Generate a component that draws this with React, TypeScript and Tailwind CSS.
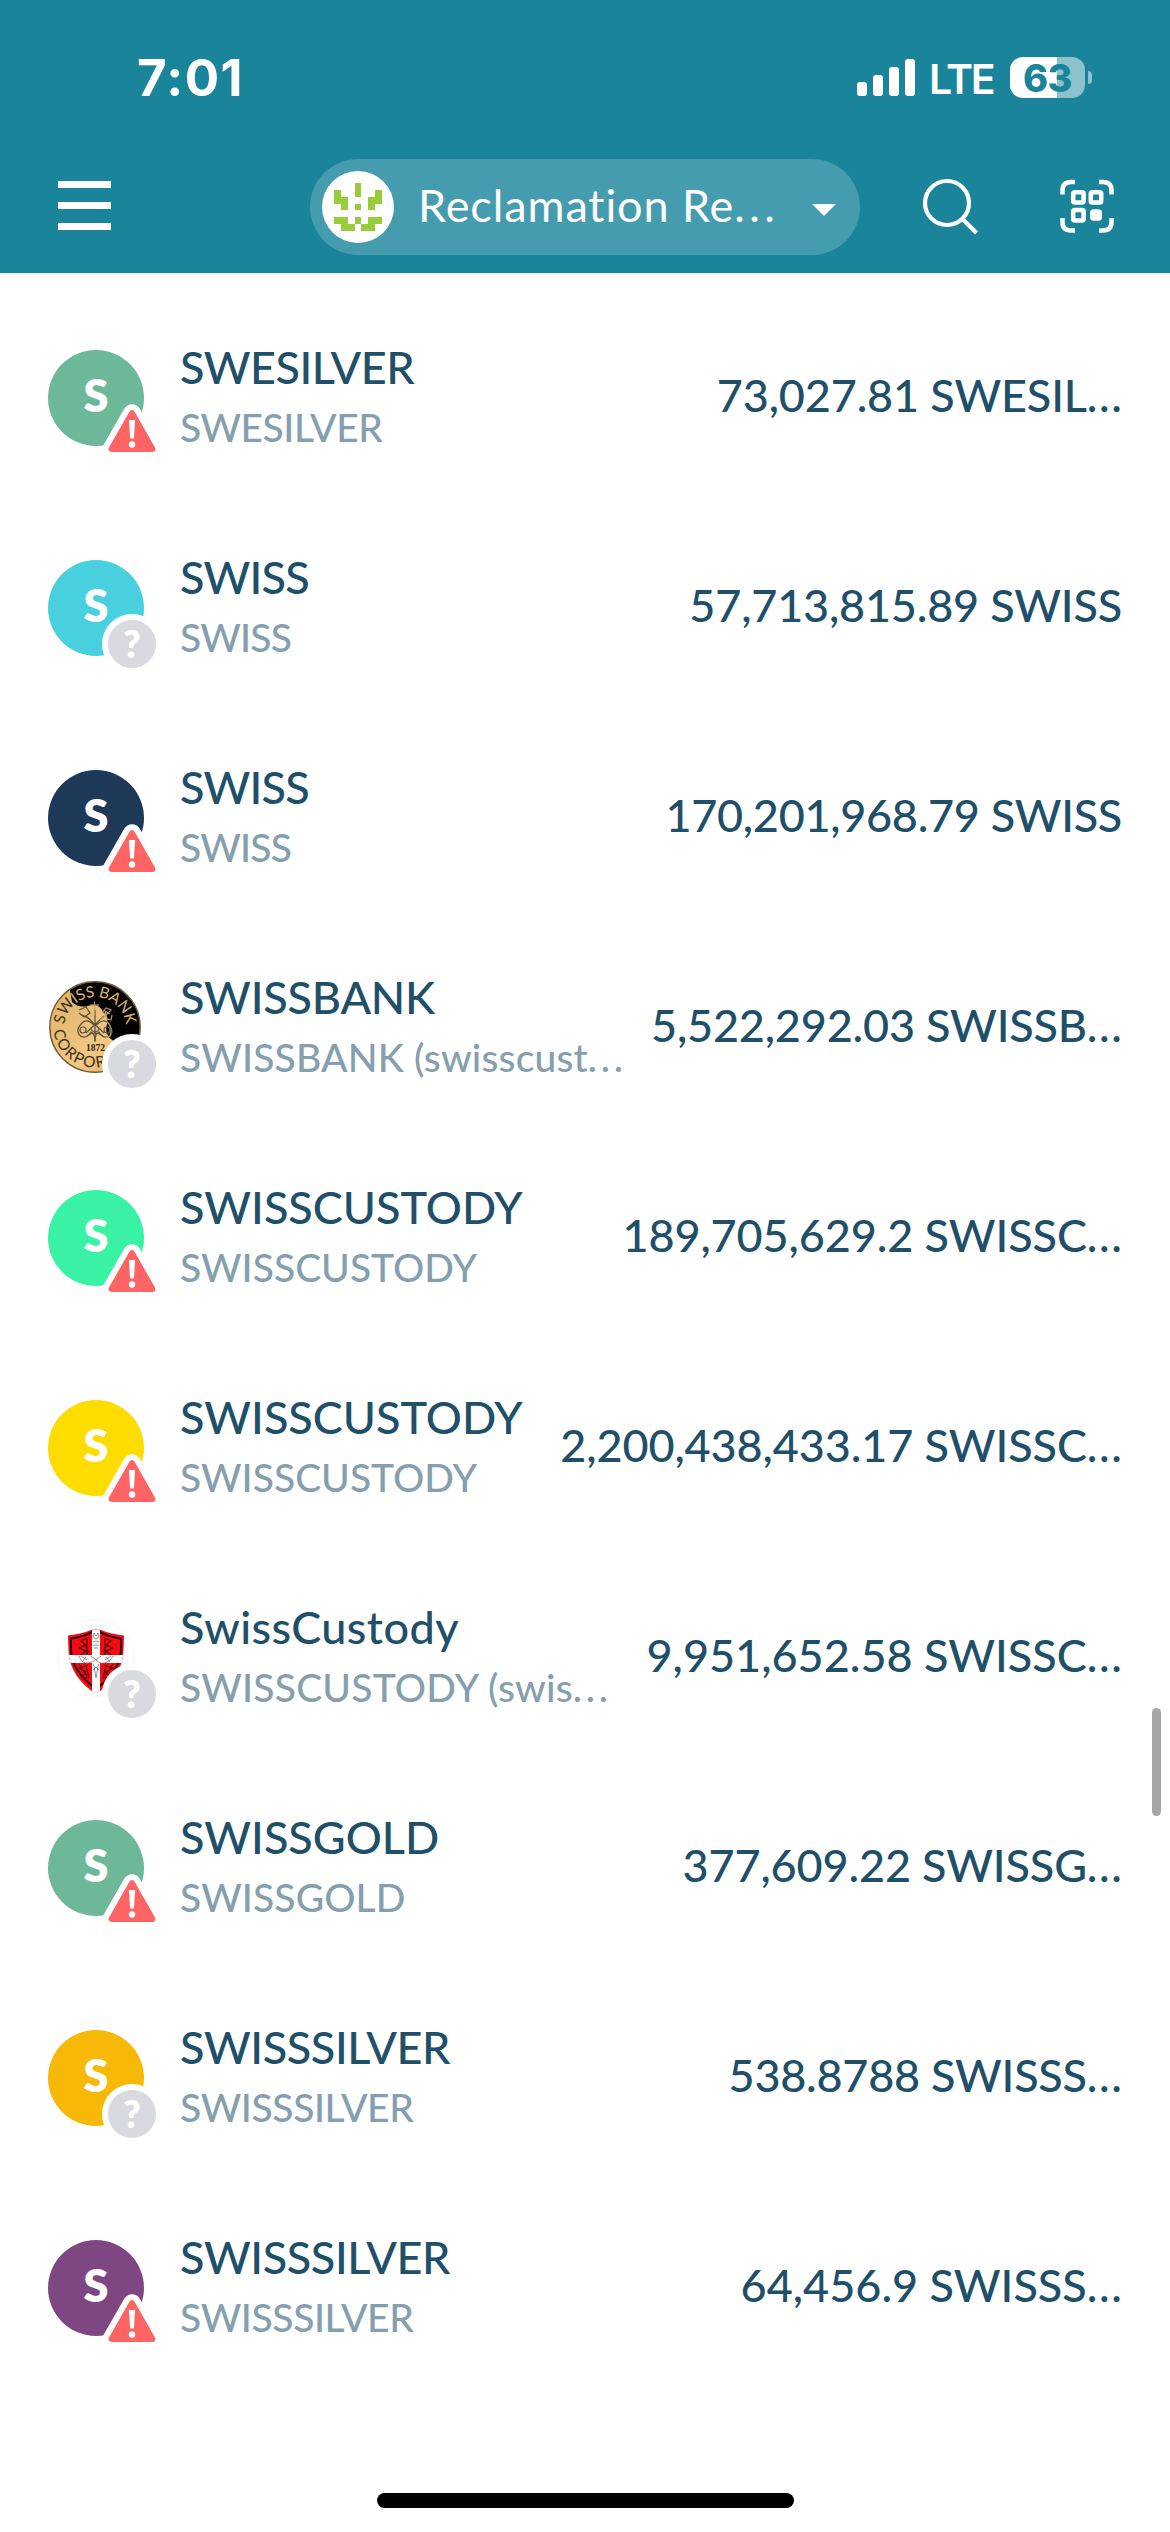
import React from "react";

type Badge = "warning" | "unknown";

type Token = {
  name: string;
  nameTracking: string;
  sub: string;
  subTracking: string;
  amount: string;
  amountTracking: string;
  badge: Badge;
  avatar: string | "coin" | "shield";
};

const tokens: Token[] = [
  { name: "SWESILVER", nameTracking: "tracking-[-0.5px]", sub: "SWESILVER", subTracking: "tracking-[-0.5px]", amount: "73,027.81 SWESIL...", amountTracking: "tracking-[-0.15px]", badge: "warning", avatar: "bg-[#6db898]" },
  { name: "SWISS", nameTracking: "tracking-[-0.8px]", sub: "SWISS", subTracking: "tracking-[-0.8px]", amount: "57,713,815.89 SWISS", amountTracking: "tracking-[-0.2px]", badge: "unknown", avatar: "bg-[#48d0de]" },
  { name: "SWISS", nameTracking: "tracking-[-0.8px]", sub: "SWISS", subTracking: "tracking-[-0.8px]", amount: "170,201,968.79 SWISS", amountTracking: "tracking-[-0.3px]", badge: "warning", avatar: "bg-[#1e3857]" },
  { name: "SWISSBANK", nameTracking: "tracking-[-0.2px]", sub: "SWISSBANK (swisscust...", subTracking: "tracking-[0.15px]", amount: "5,522,292.03 SWISSB...", amountTracking: "tracking-[-0.2px]", badge: "unknown", avatar: "coin" },
  { name: "SWISSCUSTODY", nameTracking: "tracking-[0px]", sub: "SWISSCUSTODY", subTracking: "tracking-[0px]", amount: "189,705,629.2 SWISSC...", amountTracking: "tracking-[-0.1px]", badge: "warning", avatar: "bg-[#39f2a3]" },
  { name: "SWISSCUSTODY", nameTracking: "tracking-[0px]", sub: "SWISSCUSTODY", subTracking: "tracking-[0px]", amount: "2,200,438,433.17 SWISSC...", amountTracking: "tracking-[-0.1px]", badge: "warning", avatar: "bg-[#ffdc00]" },
  { name: "SwissCustody", nameTracking: "tracking-[0.45px]", sub: "SWISSCUSTODY (swis...", subTracking: "tracking-[0.2px]", amount: "9,951,652.58 SWISSC...", amountTracking: "tracking-[0px]", badge: "unknown", avatar: "shield" },
  { name: "SWISSGOLD", nameTracking: "tracking-[0px]", sub: "SWISSGOLD", subTracking: "tracking-[0.1px]", amount: "377,609.22 SWISSG...", amountTracking: "tracking-[-0.15px]", badge: "warning", avatar: "bg-[#6db898]" },
  { name: "SWISSSILVER", nameTracking: "tracking-[-0.4px]", sub: "SWISSSILVER", subTracking: "tracking-[-0.4px]", amount: "538.8788 SWISSS...", amountTracking: "tracking-[-0.25px]", badge: "unknown", avatar: "bg-[#f8b808]" },
  { name: "SWISSSILVER", nameTracking: "tracking-[-0.4px]", sub: "SWISSSILVER", subTracking: "tracking-[-0.4px]", amount: "64,456.9 SWISSS...", amountTracking: "tracking-[0px]", badge: "warning", avatar: "bg-[#7f4782]" },
];

/** Text whose trailing dots are spaced independently of its letters. */
function Dotted({ text, dots }: { text: string; dots: string }) {
  if (!text.endsWith("...")) return <>{text}</>;
  return (
    <>
      {text.slice(0, -3)}
      <span className={dots}>...</span>
    </>
  );
}

function WarningBadge() {
  return (
    <svg viewBox="0 0 120 120" className="absolute left-0 top-0 h-[120px] w-[120px] max-w-none">
      <path d="M84 63.2 63.6 99H104.4Z" fill="#fff" stroke="#fff" strokeWidth="18" strokeLinejoin="round" />
      <path d="M84 63.2 63.6 99H104.4Z" fill="#ff6464" stroke="#ff6464" strokeWidth="6" strokeLinejoin="round" />
      <path d="M80.9 70h6.2l-1.2 18.4h-3.8Z" fill="#fff" />
      <circle cx="84" cy="94.5" r="3.2" fill="#fff" />
    </svg>
  );
}

function UnknownBadge() {
  return (
    <span className="absolute left-[54px] top-[54px] flex h-[60px] w-[60px] items-center justify-center rounded-full border-[6px] border-white bg-[#d9dae0] pb-[2px] text-[37px] font-extrabold leading-none text-white">
      ?
    </span>
  );
}

function CoinLogo() {
  return (
    <svg viewBox="0 0 96 96" className="h-24 w-24">
      <defs>
        <clipPath id="coin">
          <circle cx="47" cy="47" r="45" />
        </clipPath>
        <path id="arcTop" d="M16.200 44.500A31 31 0 0 1 77.800 44.500" />
        <path id="arcBottom" d="M5.700 50.600A41.500 41.500 0 0 0 88 52" />
        <linearGradient id="gold" x1="0" y1="0" x2="1" y2="1">
          <stop offset="0" stopColor="#dcae66" />
          <stop offset="0.6" stopColor="#f3c882" />
          <stop offset="1" stopColor="#d9a75a" />
        </linearGradient>
      </defs>
      <g clipPath="url(#coin)">
        <rect width="96" height="96" fill="url(#gold)" />
        <path d="M22 10 24 22Q30 28 40 26Q50 22 55 32Q62 36 58 48Q58 58 68 62L96 62V0H30Z" fill="#050302" />
      </g>
      <circle cx="47" cy="47" r="45.2" fill="none" stroke="#6e5a33" strokeWidth="1.4" />
      <g fontFamily="Lato, sans-serif" fontSize="15.5" fontWeight="400">
        <text fill="#3a3222">
          <textPath href="#arcTop" startOffset="0" textLength="90">
            SW<tspan fill="#d8b46e">ISS BANK</tspan>
          </textPath>
        </text>
        <text fill="#3a3222" letterSpacing="1.6">
          <textPath href="#arcBottom" startOffset="0">CORPOR</textPath>
        </text>
      </g>
      <g fill="none" stroke="#5a5240" strokeWidth="1.2">
        <path d="M47 30v32M38 36l18 17M56 36 38 53" />
        <path d="M46 45q-7-7-12-2t-4 9 5 5 8-5q4 2 4 9 0-7 4-9 3 6 8 5t5-5-4-9-12 2Z" />
        <circle cx="35" cy="50" r="3" />
        <circle cx="59" cy="50" r="3" />
        <path d="M42 48q5 8 10 0M39 56q8-6 16 0M31 30l7-3 4 6-6 4-5-4M34 35l8 4" />
      </g>
      <g fill="none" stroke="#b39a62" strokeWidth="1.2">
        <path d="M46.500 21.500v14M42 25h9M57 36l6-6-5-2-4 5M62 34l-5-3 2 8 4 1 1-5M52 40l5-4M59 42q6 5 3 14l-5 2" />
      </g>
      <text x="38" y="71" fontFamily="Liberation Serif, serif" fontSize="9.5" fontWeight="700" fill="#2c2618">1872</text>
    </svg>
  );
}

function ShieldLogo() {
  return (
    <svg viewBox="0 0 96 96" className="h-24 w-24">
      <circle cx="48" cy="48" r="38.500" fill="#fff" stroke="#f4f4f4" strokeWidth="0.8" />
      <defs>
        <clipPath id="shield">
          <path d="M20 25.500Q34 24 44 19.500H52Q62 24 76 25.500Q76 36 75 46Q72 66 53 80.500L48 83 43 80.500Q24 66 21 46Q20 36 20 25.500Z" />
        </clipPath>
      </defs>
      <g clipPath="url(#shield)">
        <rect x="18" y="16" width="60" height="68" fill="#f40b12" />
        <path d="M23 28.500Q36 27 48 20Q60 27 73 28.500Q73.500 40 72 48Q68 64 48 79Q28 64 24 48Q22.500 40 23 28.500Z" fill="none" stroke="#1d0405" strokeWidth="1.8" />
        <g fill="none" stroke="#5c0a0d" strokeWidth="1.1">
          <path d="M41 27l-8 4 5 4-7 3 7 3-5 4 7 1M39 29v16M35 32l6 10M31 37l9 7" />
          <path d="M55 27l8 4-5 4 7 3-7 3 5 4-7 1M57 29v16M61 32l-6 10M65 37l-9 7" />
          <path d="M40 55l-9 3 7 4-4 5 7 1M38 56l3 12M31 54l8 12" />
          <path d="M56 55l9 3-7 4 4 5-7 1M58 56l-3 12M65 54l-8 12" />
        </g>
        <path d="M44 16h8v29h26v8H52v32h-8V53H18v-8h26Z" fill="#fff" />
      </g>
      <g fill="none" stroke="#777" strokeWidth="0.8">
        <path d="M45 27l1-4 2 3 2-3 1 4-3 2ZM45 32q3-2 6 0M45 35h6M46 38h4" />
        <path d="M31 46q3 8 9 7t8-4q2 5 8 4t9-7M33 46l6 4M63 46l-6 4M43 46l5 4 5-4M45.500 54l2.500 14 2.500-14M45 60l3-3 3 3M34 52l4-5M62 52l-4-5" />
      </g>
    </svg>
  );
}

function Avatar({ token }: { token: Token }) {
  return (
    <div className="relative h-24 w-24 shrink-0">
      {token.avatar === "coin" ? (
        <CoinLogo />
      ) : token.avatar === "shield" ? (
        <ShieldLogo />
      ) : (
        <div className={`flex h-24 w-24 items-center justify-center rounded-full pb-[6px] text-[45px] font-extrabold leading-none text-white ${token.avatar}`}>
          S
        </div>
      )}
      {token.badge === "warning" ? <WarningBadge /> : <UnknownBadge />}
    </div>
  );
}

function TokenRow({ token }: { token: Token }) {
  return (
    <div className="flex h-[210px] items-center px-12 font-medium">
      <Avatar token={token} />
      <div className="ml-9 flex flex-1 flex-col whitespace-nowrap pb-[2px]">
        <span className={`text-[45px] leading-[60px] text-[#204f69] ${token.nameTracking}`}>{token.name}</span>
        <span className={`text-[39px] leading-[60px] text-[#869fae] ${token.subTracking}`}>
          <Dotted text={token.sub} dots="tracking-[3.8px]" />
        </span>
      </div>
      <span className={`whitespace-nowrap pb-[7px] text-[45px] leading-[60px] text-[#204f69] ${token.amountTracking}`}>
        <Dotted text={token.amount} dots="-mr-[1.5px] tracking-[1.6px]" />
      </span>
    </div>
  );
}

const identicon = ["...#...", "#..#..#", "##...##", ".#.#.#.", ".......", "##.#.##", ".##.##."];

function Identicon() {
  return (
    <div className="flex h-[72px] w-[72px] items-center justify-center rounded-full bg-white">
      <svg viewBox="0 0 7 7" className="h-12 w-12" shapeRendering="crispEdges">
        {identicon.flatMap((row, y) =>
          [...row].map((c, x) => (c === "#" ? <rect key={`${x}-${y}`} x={x} y={y} width="1" height="1" fill="#99cc3b" /> : null)),
        )}
      </svg>
    </div>
  );
}

function StatusBar() {
  return (
    <div className="flex h-[156px] justify-between pl-[137px] pr-[78px] font-['Inter'] text-white">
      <span className="mt-[48px] text-[51px] font-bold leading-[60px] tracking-[1.4px]">7:01</span>
      <div className="mt-[57px] flex h-[41px]">
        <svg viewBox="0 0 58 41" className="h-[41px] w-[58px]" fill="#fff">
          <rect x="0" y="25" width="10" height="14" rx="3" />
          <rect x="16" y="18" width="10" height="21" rx="3" />
          <rect x="32" y="10" width="10" height="29" rx="3" />
          <rect x="48" y="2" width="10" height="37" rx="3" />
        </svg>
        <span className="ml-[14px] w-[66px] text-[41px] font-semibold leading-[44px] tracking-[-2.4px]">LTE</span>
        <div className="ml-[15px] flex h-[41px] w-[75px] items-center justify-center rounded-[13px] bg-[linear-gradient(to_right,#fff_63%,#8cc2cc_63%)] text-[38px] font-extrabold leading-none tracking-[-0.5px] text-[#1a859a]">
          63
        </div>
        <div className="ml-[3px] mt-[14px] h-[13px] w-[4px] rounded-r-full bg-[#8cc2cc]" />
      </div>
    </div>
  );
}

function NavBar() {
  return (
    <div className="flex h-[117px] items-start text-white">
      <div className="ml-[58px] mt-[25px] flex w-[53px] flex-col gap-[14px]">
        <div className="h-[7px] bg-white" />
        <div className="h-[7px] bg-white" />
        <div className="h-[7px] bg-white" />
      </div>
      <div className="ml-[199px] mt-[3px] flex h-24 w-[550px] items-center rounded-full bg-[#469caf] pl-3">
        <Identicon />
        <span className="ml-[24px] whitespace-nowrap pb-[5px] text-[45px] leading-[60px] tracking-[0.9px]">
          Reclamation Re<span className="tracking-[4.4px]">...</span>
        </span>
        <svg viewBox="0 0 24 12" className="ml-auto mr-[24px] mt-[6px] h-3 w-6">
          <path d="M0 0H24L12 12Z" fill="#fff" />
        </svg>
      </div>
      <svg viewBox="0 0 58 64" className="ml-[61px] mt-[20px] h-16 w-[58px]" fill="none" stroke="#fff" strokeWidth="4.2">
        <circle cx="26" cy="27" r="22" />
        <path d="M41.500 43 55.500 57" />
      </svg>
      <svg viewBox="0 0 54 54" className="ml-[81px] mt-[22.500px] h-[54px] w-[54px]" fill="none" stroke="#fff" strokeWidth="4.500">
        <path d="M2.500 15.500V11.500Q2.500 3 11 3H15M39 3H43Q51.500 3 51.500 11.500V15.500M51.500 39V43Q51.500 51.500 43 51.500H39M15 51.500H11Q2.500 51.500 2.500 43V39" />
        <rect x="13.200" y="13.200" width="10.400" height="10.400" rx="1.500" />
        <rect x="30.800" y="13.200" width="10.400" height="10.400" rx="1.500" />
        <rect x="13.200" y="31" width="10.400" height="10.400" rx="1.500" />
        <rect x="30" y="30.200" width="12" height="11.500" rx="3.500" fill="#fff" stroke="none" />
      </svg>
    </div>
  );
}

export default function App() {
  return (
    <div className="relative h-[2532px] w-[1170px] overflow-hidden bg-white font-['Lato',sans-serif]">
      <header className="h-[273px] bg-[#1a859a]">
        <StatusBar />
        <NavBar />
      </header>
      <main className="pt-5">
        {tokens.map((token, i) => (
          <TokenRow key={i} token={token} />
        ))}
      </main>
      <div className="absolute right-[9px] top-[1708px] h-[108px] w-[9px] rounded-full bg-[#a6a6a6]" />
      <div className="absolute bottom-[24px] left-[377px] h-[15px] w-[417px] rounded-full bg-black" />
    </div>
  );
}
